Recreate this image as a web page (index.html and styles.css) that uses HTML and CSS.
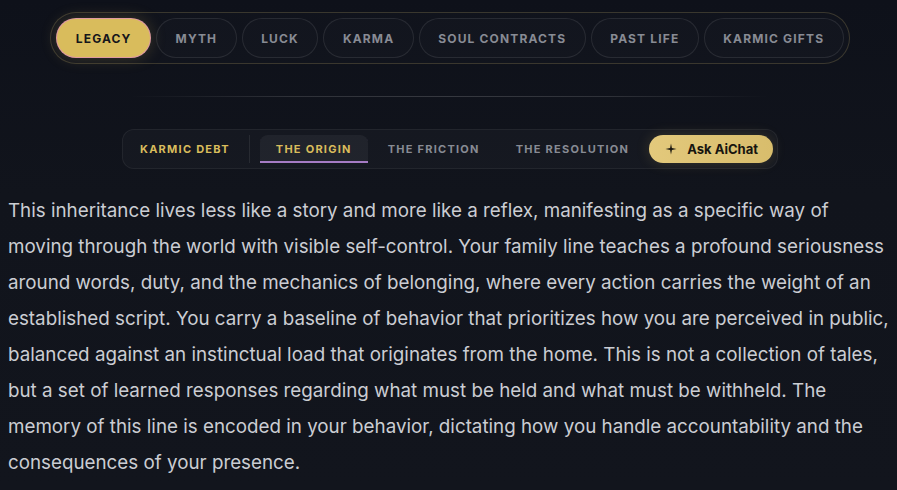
FILE: index.html
```html
<!DOCTYPE html>
<html>
<head>
	<meta charset="UTF-8">
	<meta name="viewport" content="width=device-width, initial-scale=1">
	<title>Legacy - Karmic Debt</title>
	<link rel="stylesheet" href="styles.css">
</head>
<body>

	<nav class="topic-bar">
		<div class="topic-pills">
			<button class="pill active">Legacy</button>
			<button class="pill">Myth</button>
			<button class="pill">Luck</button>
			<button class="pill">Karma</button>
			<button class="pill">Soul Contracts</button>
			<button class="pill">Past Life</button>
			<button class="pill">Karmic Gifts</button>
		</div>
	</nav>

	<hr class="fade-rule">

	<div class="section-bar">
		<div class="section-tabs">
			<span class="section-title">Karmic Debt</span>
			<span class="tab-sep"></span>
			<button class="tab current">The Origin</button>
			<button class="tab">The Friction</button>
			<button class="tab">The Resolution</button>
			<button class="ask-btn">
				<svg width="12" height="12" viewBox="0 0 12 12"><path d="M6 0.5 L6.9 5.1 L11.5 6 L6.9 6.9 L6 11.5 L5.1 6.9 L0.5 6 L5.1 5.1 Z" fill="#1a1710"/></svg>
				Ask AiChat
			</button>
		</div>
	</div>

	<p class="reading">This inheritance lives less like a story and more like a reflex, manifesting as a specific way of moving through the world with visible self-control. Your family line teaches a profound seriousness around words, duty, and the mechanics of belonging, where every action carries the weight of an established script. You carry a baseline of behavior that prioritizes how you are perceived in public, balanced against an instinctual load that originates from the home. This is not a collection of tales, but a set of learned responses regarding what must be held and what must be withheld. The memory of this line is encoded in your behavior, dictating how you handle accountability and the consequences of your presence.</p>

</body>
</html>
```

FILE: styles.css
```css
:root {
	--bg: #11141c;
	--gold: #d9bc5c;
	--text: #cbcdd3;
	--muted: #888b94;
	--font: 'Inter', 'Noto Sans', sans-serif;
}
html, body {
	height: 100%;
}
body {
	margin: 0;
	padding: 12px 8px 0;
	background: linear-gradient(180deg, #0e111a 0%, #11141c 40%, #12151d 100%);
	font-family: var(--font);
	overflow: hidden;
}
button {
	font-family: var(--font);
	cursor: pointer;
}

/* top topic pills */
.topic-bar {
	display: flex;
	justify-content: center;
	padding-left: 3px;
}
.topic-pills {
	display: flex;
	gap: 5px;
	padding: 5px;
	border: 1px solid rgba(205, 180, 110, 0.22);
	border-radius: 999px;
	background: rgba(255, 255, 255, 0.012);
}
.pill {
	height: 40px;
	padding: 0 18.5px;
	border: 1px solid rgba(255, 255, 255, 0.09);
	border-radius: 999px;
	background: rgba(255, 255, 255, 0.01);
	color: var(--muted);
	font-size: 12px;
	font-weight: 700;
	letter-spacing: 1.15px;
	text-transform: uppercase;
}
.pill.active {
	background: var(--gold);
	color: #16161b;
	border-color: rgba(225, 140, 190, 0.7);
	box-shadow: 0 0 16px rgba(217, 188, 92, 0.22);
}

.fade-rule {
	width: 640px;
	height: 1px;
	margin: 32px auto 32px;
	border: none;
	background: linear-gradient(90deg, rgba(255,255,255,0) 0%, rgba(255,255,255,0.13) 25%, rgba(255,255,255,0.16) 50%, rgba(255,255,255,0.13) 75%, rgba(255,255,255,0) 100%);
}

/* section tabs */
.section-bar {
	display: flex;
	justify-content: center;
	padding-left: 3px;
}
.section-tabs {
	display: flex;
	align-items: center;
	height: 38px;
	padding: 0 4px 0 17px;
	border: 1px solid rgba(255, 255, 255, 0.06);
	border-radius: 12px;
	background: rgba(255, 255, 255, 0.025);
	font-size: 11px;
	font-weight: 700;
	letter-spacing: 1.25px;
	text-transform: uppercase;
}
.section-title {
	color: var(--gold);
}
.tab-sep {
	width: 1px;
	height: 28px;
	margin: 0 10px 0 19px;
	background: rgba(255, 255, 255, 0.08);
}
.tab {
	height: 28px;
	padding: 0 16px;
	margin-right: 4px;
	border: none;
	border-radius: 8px 8px 0 0;
	background: none;
	color: var(--muted);
	font-size: 11px;
	font-weight: 700;
	letter-spacing: 1.25px;
	text-transform: uppercase;
}
.tab.current {
	background: rgba(255, 255, 255, 0.05);
	color: var(--gold);
	box-shadow: inset 0 -2px 0 #a57bc4;
}
.ask-btn {
	display: flex;
	align-items: center;
	gap: 10px;
	height: 28px;
	padding: 0 15px 0 16px;
	border: none;
	border-radius: 999px;
	background: linear-gradient(90deg, #e3c97c, #d8bd6c);
	box-shadow: 0 0 14px rgba(217, 188, 92, 0.18);
	color: #17150f;
	font-size: 13px;
	font-weight: 700;
	letter-spacing: 0;
	text-transform: none;
}

.reading {
	margin: 24px 0 0;
	color: var(--text);
	font-size: 18.8px;
	line-height: 36px;
}
```
